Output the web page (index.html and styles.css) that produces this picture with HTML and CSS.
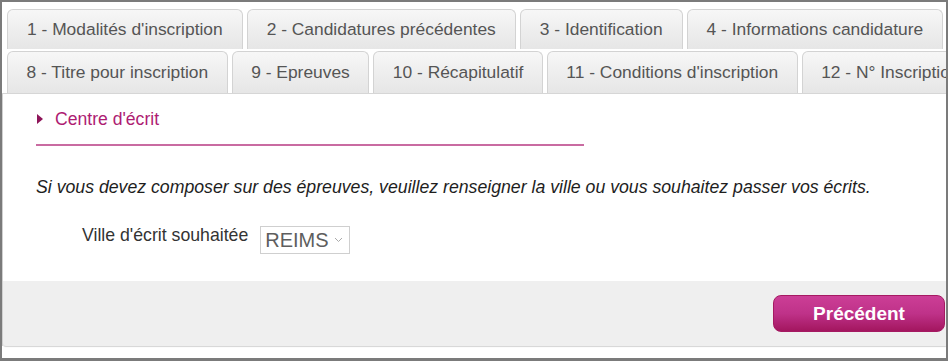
FILE: index.html
```html
<!DOCTYPE html>
<html lang="fr">
<head>
<meta charset="utf-8">
<title>Centre d'écrit</title>
<link rel="stylesheet" href="styles.css">
</head>
<body>
<div class="frame">
  <div class="tabs">
    <ul class="tab-row">
      <li class="tab">1 - Modalités d'inscription</li>
      <li class="tab">2 - Candidatures précédentes</li>
      <li class="tab">3 - Identification</li>
      <li class="tab">4 - Informations candidature</li>
    </ul>
    <ul class="tab-row tab-row-2">
      <li class="tab">8 - Titre pour inscription</li>
      <li class="tab">9 - Epreuves</li>
      <li class="tab">10 - Récapitulatif</li>
      <li class="tab">11 - Conditions d'inscription</li>
      <li class="tab">12 - N° Inscription</li>
    </ul>
  </div>
  <div class="panel">
    <div class="content">
      <h2 class="section-title"><span class="caret"></span>Centre d'écrit</h2>
      <p class="intro">Si vous devez composer sur des épreuves, veuillez renseigner la ville ou vous souhaitez passer vos écrits.</p>
      <div class="field">
        <label class="field-label">Ville d'écrit souhaitée</label>
        <div class="select">
          <span class="select-value">REIMS</span>
          <svg class="chevron" width="9" height="6" viewBox="0 0 9 6"><path d="M1 1 L4.5 4.5 L8 1" fill="none" stroke="#aaa" stroke-width="1"/></svg>
        </div>
      </div>
    </div>
    <div class="footer">
      <button class="btn-prev">Précédent</button>
    </div>
  </div>
</div>
</body>
</html>
```
FILE: styles.css
```css
html, body {
  margin: 0;
  padding: 0;
  background: #fff;
}
.frame {
  box-sizing: border-box;
  width: 948px;
  height: 361px;
  border: 2px solid #7b7b7b;
  border-bottom-width: 3px;
  overflow: hidden;
  background: #fff;
  font-family: "Liberation Sans", Arial, sans-serif;
  font-size: 17.4px;
}
.tabs {
  padding: 7px 0 0 5px;
  display: flex;
  flex-direction: column;
  gap: 2px;
}
.tab-row {
  list-style: none;
  margin: 0;
  padding: 0;
  display: flex;
  gap: 4px;
  flex-wrap: nowrap;
  height: 40px;
}
.tab-row-2 {
  height: 42px;
}
.tab {
  flex: none;
  box-sizing: border-box;
  height: 100%;
  display: flex;
  align-items: center;
  padding: 0 19px;
  border: 1px solid #d3d3d3;
  border-bottom: none;
  border-radius: 6px 6px 0 0;
  background: linear-gradient(#f7f7f7 0%, #efefef 45%, #e6e6e6 100%);
  color: #555;
  white-space: nowrap;
}
.tab-row-2 .tab {
  padding: 0 18.5px;
}
.panel {
  border-top: 1px solid #d6d6d6;
  border-left: 1px solid #d0d0d0;
}
.content {
  padding: 14px 0 0 33px;
}
.section-title {
  margin: 0;
  width: 548px;
  padding-bottom: 14px;
  border-bottom: 2px solid #c96ba1;
  display: flex;
  align-items: center;
  font-size: 17.6px;
  font-weight: normal;
  line-height: 22px;
  color: #ae1c72;
}
.caret {
  width: 0;
  height: 0;
  border-top: 5px solid transparent;
  border-bottom: 5px solid transparent;
  border-left: 6px solid #8e1559;
  margin: 0 12px 0 1px;
}
.intro {
  margin: 30px 0 0 0;
  font-size: 17.7px;
  font-style: italic;
  line-height: 22px;
  color: #1e1e1e;
}
.field {
  margin: 28px 0 0 46px;
  display: flex;
  align-items: flex-start;
  gap: 12px;
}
.field-label {
  color: #333;
  font-size: 17.7px;
  line-height: 22px;
  margin-top: -2px;
}
.select {
  box-sizing: border-box;
  width: 90px;
  height: 28px;
  border: 1px solid #cfcfcf;
  display: flex;
  align-items: center;
  justify-content: space-between;
  padding: 0 6px 0 4px;
  background: #fff;
}
.select-value {
  font-size: 20px;
  color: #5e5e5e;
  padding-top: 1px;
}
.chevron {
  display: block;
}
.footer {
  margin-top: 27px;
  height: 65px;
  box-sizing: border-box;
  background: #efefef;
  padding: 14px 1px 0 0;
  display: flex;
  justify-content: flex-end;
  align-items: flex-start;
  box-shadow: 0 1px 1px #d4d4d4;
  border-radius: 0 0 0 3px;
}
.btn-prev {
  width: 172px;
  height: 37px;
  border: 1px solid #a51a62;
  border-radius: 8px;
  background: linear-gradient(#cc3e96 0%, #bf3289 50%, #a3165f 100%);
  color: #fff;
  font-family: "Liberation Sans", Arial, sans-serif;
  font-weight: bold;
  font-size: 19px;
  padding: 0;
  cursor: pointer;
}
```
